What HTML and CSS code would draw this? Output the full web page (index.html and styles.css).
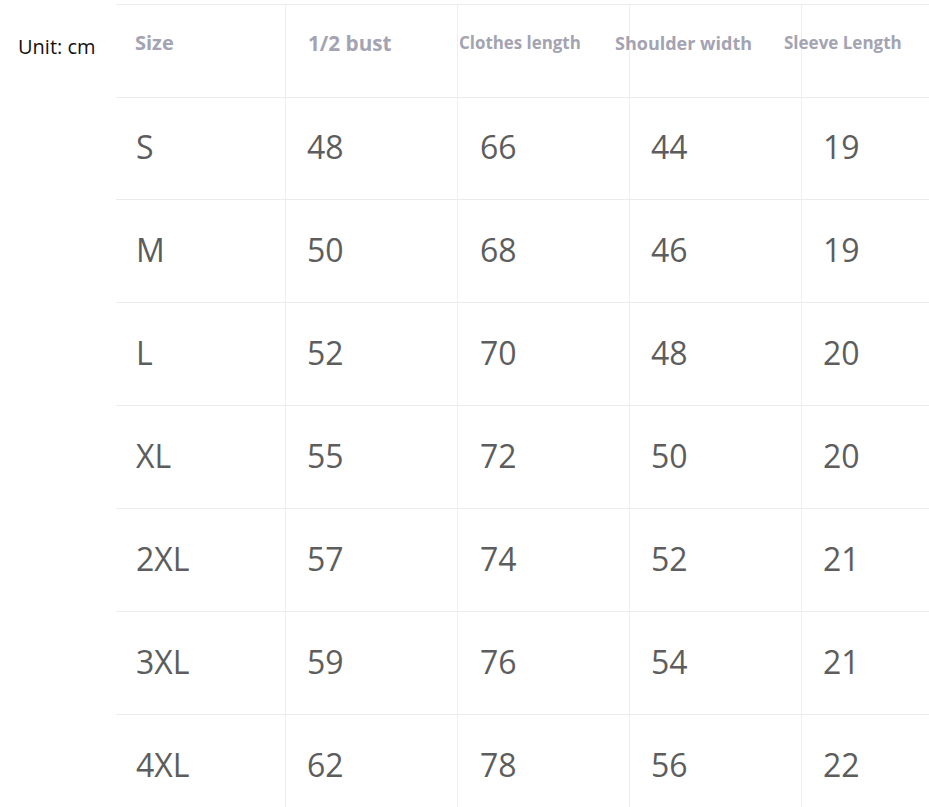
FILE: index.html
```html
<!DOCTYPE html>
<html>
<head>
<meta charset="utf-8">
<link rel="stylesheet" href="styles.css">
</head>
<body>
<div class="page">
  <div class="unit">Unit: cm</div>
  <div class="chart">
    <div class="hcell h1"><span>Size</span></div>
    <div class="hcell h2"><span>1/2 bust</span></div>
    <div class="hcell h3"><span>Clothes length</span></div>
    <div class="hcell h4"><span>Shoulder width</span></div>
    <div class="hcell h5"><span>Sleeve Length</span></div>

    <div class="cell">S</div><div class="cell">48</div><div class="cell">66</div><div class="cell">44</div><div class="cell">19</div>
    <div class="cell">M</div><div class="cell">50</div><div class="cell">68</div><div class="cell">46</div><div class="cell">19</div>
    <div class="cell">L</div><div class="cell">52</div><div class="cell">70</div><div class="cell">48</div><div class="cell">20</div>
    <div class="cell">XL</div><div class="cell">55</div><div class="cell">72</div><div class="cell">50</div><div class="cell">20</div>
    <div class="cell">2XL</div><div class="cell">57</div><div class="cell">74</div><div class="cell">52</div><div class="cell">21</div>
    <div class="cell">3XL</div><div class="cell">59</div><div class="cell">76</div><div class="cell">54</div><div class="cell">21</div>
    <div class="cell">4XL</div><div class="cell">62</div><div class="cell">78</div><div class="cell">56</div><div class="cell">22</div>
  </div>
</div>
</body>
</html>
```
FILE: styles.css
```css
html, body {
  margin: 0;
  padding: 0;
  background: #ffffff;
  overflow: hidden;
}
.page {
  display: flex;
  align-items: flex-start;
  width: 929px;
  height: 807px;
  overflow: hidden;
}
.unit {
  flex: 0 0 116px;
  box-sizing: border-box;
  padding: 34px 0 0 18px;
  font-family: "Open Sans", "Noto Sans", sans-serif;
  font-size: 20px;
  line-height: 26px;
  color: #111111;
  white-space: nowrap;
}
.chart {
  flex: 0 0 auto;
  margin-top: 4px;
  display: grid;
  grid-template-columns: 170px 172px 172px 172px 172px;
  grid-template-rows: 93px 102px;
  grid-auto-rows: 103px;
  border-top: 1px solid #ebebeb;
}
.hcell, .cell {
  box-sizing: border-box;
  border-bottom: 1px solid #ebebeb;
  border-right: 1px solid #efefef;
  white-space: nowrap;
}
.hcell {
  font-family: "Open Sans", "Noto Sans", sans-serif;
  font-weight: 700;
  color: #a3a3b2;
  padding-top: 26px;
  line-height: 24px;
}
.hcell span { display: block; }
.h1 { padding-left: 19px; font-size: 20px; }
.h2 { padding-left: 22px; font-size: 20.7px; }
.h3 { padding-left: 1px; font-size: 16.9px; }
.h4 { font-size: 18px; }
.h4 span { margin-left: -15px; }
.h5 { padding-left: 0; font-size: 17px; }
.h5 span { margin-left: -18px; }
.cell {
  display: flex;
  align-items: center;
  padding-left: 20px;
  padding-bottom: 4px;
  font-family: "Open Sans", "Noto Sans", sans-serif;
  font-size: 32px;
  color: #5d5d5d;
}
.cell:nth-child(5n+2) { padding-left: 21px; }
.cell:nth-child(5n+3) { padding-left: 22px; }
.cell:nth-child(5n+4) { padding-left: 21px; }
.cell:nth-child(5n+5) { padding-left: 21px; }
```
